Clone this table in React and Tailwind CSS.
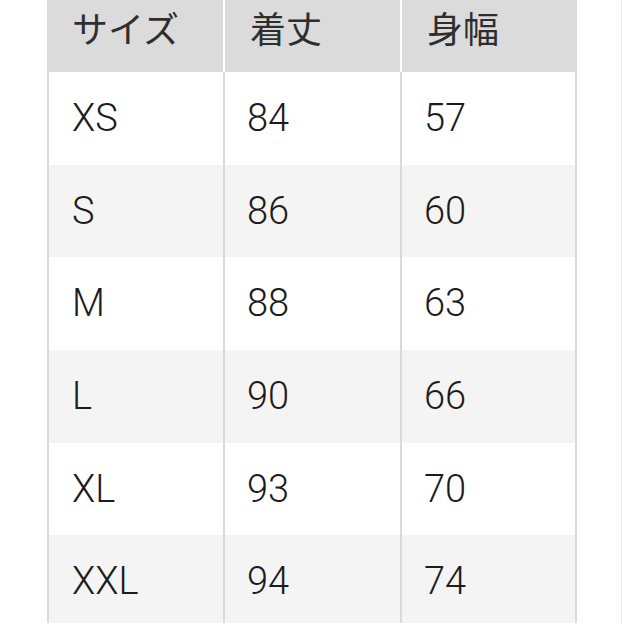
const rows = [
  ['XS', '84', '57'],
  ['S', '86', '60'],
  ['M', '88', '63'],
  ['L', '90', '66'],
  ['XL', '93', '70'],
  ['XXL', '94', '74'],
];

const heights = ['h-[93px]', 'h-[92px]', 'h-[93px]', 'h-[93px]', 'h-[92px]', 'h-[93px]'];

export default function App() {
  return (
    <div className="relative w-[623px] h-[623px] overflow-hidden bg-white font-['Roboto','Noto_Sans_CJK_JP',sans-serif] font-light text-[#1c1c1c]">
      <div className="absolute top-0 right-[1px] h-full w-px bg-[#ececec]" />
      <div className="ml-[47px] w-[530px]">
        <div className="grid grid-cols-[176px_175px_175px] gap-[2px] bg-white h-[72px]">
          {['サイズ', '着丈', '身幅'].map((h) => (
            <div key={h} className="flex items-center bg-[#dbdbdb] pl-[25px] pb-[22px] text-[36px] font-normal text-[#2e2e2e] font-['Noto_Sans_CJK_JP',sans-serif]">
              {h}
            </div>
          ))}
        </div>
        {rows.map((r, i) => (
          <div key={r[0]} className={`grid grid-cols-[174px_175px_173px] gap-[2px] px-[2px] bg-[#dadada] ${heights[i]}`}>
            {r.map((c, j) => (
              <div key={j} className={`flex items-center text-[38px] ${j === 0 ? 'pl-[23px]' : 'pl-[22px]'} ${i % 2 === 0 ? 'bg-white' : 'bg-[#f4f4f4]'}`}>
                {c}
              </div>
            ))}
          </div>
        ))}
      </div>
    </div>
  );
}
